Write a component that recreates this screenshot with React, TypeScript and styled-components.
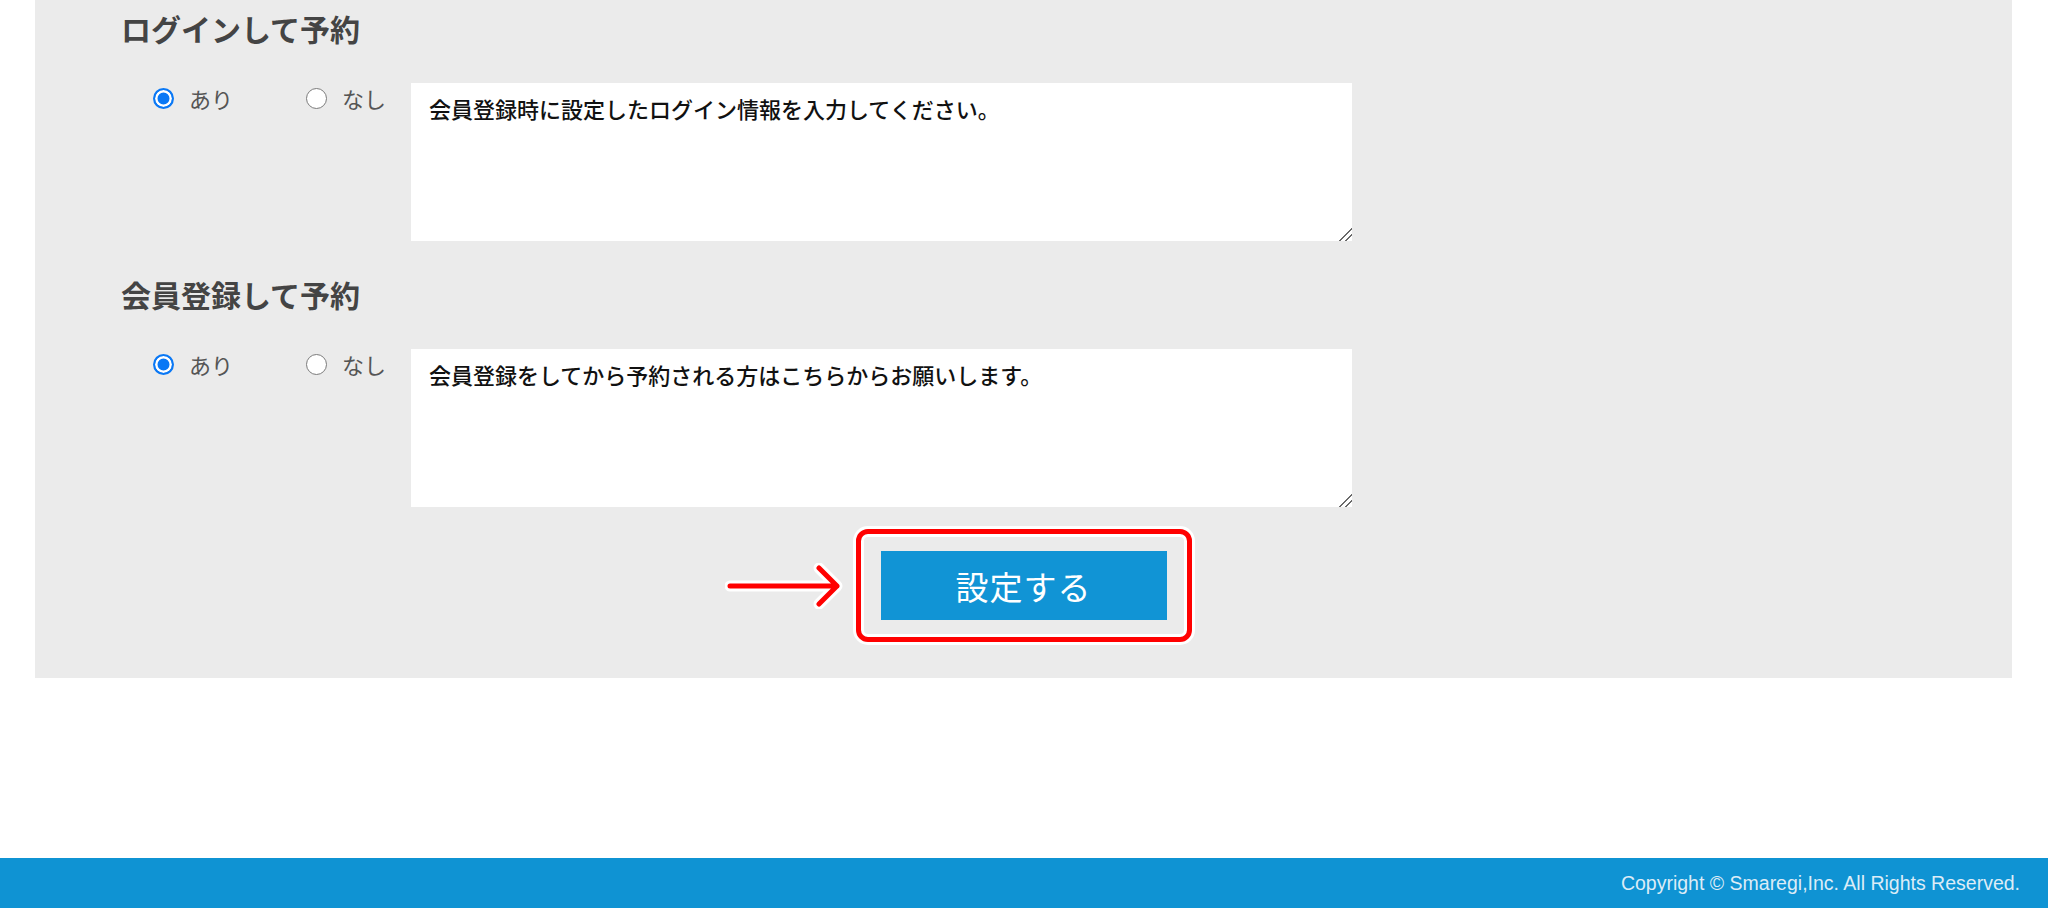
import React from "react"
import styled, { createGlobalStyle } from "styled-components"

const GlobalStyle = createGlobalStyle`
  html, body {
    margin: 0;
    padding: 0;
    background: #fff;
  }
  body {
    font-family: "Noto Sans CJK JP", "Noto Sans", sans-serif;
  }
`

interface Section {
  title: string
  name: string
  message: string
}

const sections: Section[] = [
  {
    title: "ログインして予約",
    name: "login",
    message: "会員登録時に設定したログイン情報を入力してください。"
  },
  {
    title: "会員登録して予約",
    name: "register",
    message: "会員登録をしてから予約される方はこちらからお願いします。"
  }
]

const ArrowIcon = () => (
  <svg width="118" height="46" viewBox="0 0 118 46">
    <g fill="none" strokeLinecap="round" strokeLinejoin="round">
      <path d="M5 23 H112 M94 5 L112 23 L94 41" stroke="#fff" strokeWidth="11" />
      <path d="M5 23 H112 M94 5 L112 23 L94 41" stroke="#f00" strokeWidth="5" />
    </g>
  </svg>
)

export default function App() {
  return <>
    <GlobalStyle />
    <Page>
      <Panel>
        {sections.map(section => (
          <Block key={section.name}>
            <Heading>{section.title}</Heading>
            <Row>
              <RadioGroup>
                <Option>
                  <Radio type="radio" name={section.name} defaultChecked />
                  <span>あり</span>
                </Option>
                <Option>
                  <Radio type="radio" name={section.name} />
                  <span>なし</span>
                </Option>
              </RadioGroup>
              <Message defaultValue={section.message} />
            </Row>
          </Block>
        ))}

        <SubmitRow>
          <HighlightFrame>
            <ArrowMark>
              <ArrowIcon />
            </ArrowMark>
            <SubmitButton type="button">設定する</SubmitButton>
          </HighlightFrame>
        </SubmitRow>
      </Panel>

      <Footer>
        <Copyright>Copyright © Smaregi,Inc. All Rights Reserved.</Copyright>
      </Footer>
    </Page>
  </>
}

const Page = styled.div`
  display: flex;
  flex-direction: column;
  min-height: 908px;
`

const Panel = styled.main`
  margin: 0 36px 0 35px;
  padding: 8px 0 36px 86px;
  background: #ebebeb;
`

const Block = styled.section`
  & + & {
    margin-top: 33px;
  }
`

const Heading = styled.h3`
  margin: 0;
  font-size: 30px;
  line-height: 40px;
  font-weight: 700;
  color: #444;
`

const Row = styled.div`
  display: flex;
  align-items: flex-start;
  margin-top: 35px;
`

const RadioGroup = styled.div`
  display: flex;
  align-items: center;
  gap: 73px;
  width: 258px;
  margin-left: 32px;
  height: 30px;
`

const Option = styled.label`
  display: flex;
  align-items: center;
  gap: 15px;
  font-size: 22px;
  line-height: 30px;
  color: #555;
`

const Radio = styled.input`
  appearance: none;
  flex: none;
  margin: 0;
  width: 21px;
  height: 21px;
  border-radius: 50%;
  border: 1.5px solid #7b7b7b;
  background: #fff;

  &:checked {
    border: 2px solid #0a78f5;
    background: #0a78f5;
    box-shadow: inset 0 0 0 2.5px #fff;
  }
`

const Message = styled.textarea`
  box-sizing: border-box;
  width: 941px;
  height: 158px;
  margin: 0;
  padding: 9px 18px;
  border: none;
  outline: none;
  background: #fff;
  font-family: "Noto Sans CJK JP", sans-serif;
  font-size: 22px;
  font-weight: 500;
  line-height: 32px;
  color: #111;

  &::-webkit-resizer {
    background: linear-gradient(
      135deg,
      transparent 0 55%,
      #6a6a6a 55% 61%,
      transparent 61% 76%,
      #6a6a6a 76% 82%,
      transparent 82%
    );
  }
`

const SubmitRow = styled.div`
  display: flex;
  justify-content: center;
  margin: 22px 0 0 -86px;
`

const HighlightFrame = styled.div`
  position: relative;
  padding: 17px 20px;
  border: 5px solid #f00;
  border-radius: 12px;
  box-shadow: 0 0 0 3px #fff, inset 0 0 0 3px #fff;
`

const ArrowMark = styled.div`
  position: absolute;
  right: calc(100% + 18px);
  top: 50%;
  transform: translateY(-50%);
  display: flex;
`

const SubmitButton = styled.button`
  display: block;
  width: 286px;
  height: 69px;
  border: none;
  background: #1194d5;
  color: #fff;
  font-family: "Noto Sans CJK JP", sans-serif;
  font-size: 33px;
  letter-spacing: 1px;
  cursor: pointer;
`

const Footer = styled.footer`
  margin-top: auto;
  height: 50px;
  display: flex;
  align-items: center;
  justify-content: flex-end;
  padding: 0 28px;
  background: #0f93d3;
`

const Copyright = styled.span`
  font-family: "Liberation Sans", Arial, sans-serif;
  font-size: 19.5px;
  color: #dcecf7;
`
